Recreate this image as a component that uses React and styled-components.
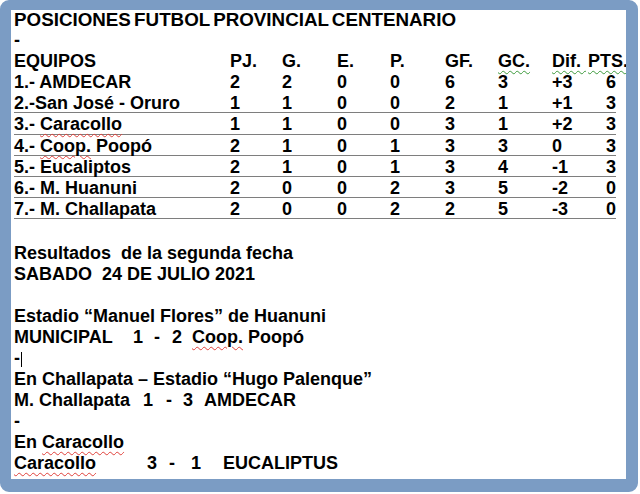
import React from "react";
import styled, { createGlobalStyle } from "styled-components";

const standings = [
  { team: "1.- AMDECAR", pj: 2, g: 2, e: 0, p: 0, gf: 6, gc: 3, dif: "+3", pts: 6 },
  { team: "2.-San José - Oruro", pj: 1, g: 1, e: 0, p: 0, gf: 2, gc: 1, dif: "+1", pts: 3, lined: true },
  { team: "3.- ", flagged: "Caracollo", pj: 1, g: 1, e: 0, p: 0, gf: 3, gc: 1, dif: "+2", pts: 3, lined: true },
  { team: "4.- ", flagged: "Coop.", rest: " Poopó", pj: 2, g: 1, e: 0, p: 1, gf: 3, gc: 3, dif: "0", pts: 3, lined: true },
  { team: "5.- Eucaliptos", pj: 2, g: 1, e: 0, p: 1, gf: 3, gc: 4, dif: "-1", pts: 3, lined: true },
  { team: "6.- M. Huanuni", pj: 2, g: 0, e: 0, p: 2, gf: 3, gc: 5, dif: "-2", pts: 0, lined: true },
  { team: "7.- M. Challapata", pj: 2, g: 0, e: 0, p: 2, gf: 2, gc: 5, dif: "-3", pts: 0, lined: true },
];

const RED = "#e0403a";
const GREEN = "#3c9a3c";

export default function App() {
  return (
    <>
      <GlobalStyle />
      <Frame>
        <Title>POSICIONES FUTBOL PROVINCIAL CENTENARIO</Title>
        <Line>-</Line>
        <Row>
          <Cell>EQUIPOS</Cell>
          <Cell>PJ.</Cell>
          <Cell>G.</Cell>
          <Cell>E.</Cell>
          <Cell>P.</Cell>
          <Cell>GF.</Cell>
          <Cell><Squiggle $color={GREEN}>GC.</Squiggle></Cell>
          <Cell><Squiggle $color={GREEN}>Dif. </Squiggle></Cell>
          <Cell><Squiggle $color={GREEN}>PTS.</Squiggle></Cell>
        </Row>
        {standings.map((r, i) => (
          <Row key={i} $lined={r.lined}>
            <Cell>
              {r.team}
              {r.flagged && <Squiggle $color={RED}>{r.flagged}</Squiggle>}
              {r.rest}
            </Cell>
            <Cell>{r.pj}</Cell>
            <Cell>{r.g}</Cell>
            <Cell>{r.e}</Cell>
            <Cell>{r.p}</Cell>
            <Cell>{r.gf}</Cell>
            <Cell>{r.gc}</Cell>
            <Cell>{r.dif}</Cell>
            <Cell $right>{r.pts}</Cell>
          </Row>
        ))}

        <Results>
          <Para>&nbsp;</Para>
          <Para>Resultados&nbsp; de la segunda fecha</Para>
          <Para>SABADO&nbsp; 24 DE JULIO 2021</Para>
          <Para>&nbsp;</Para>
          <Para>Estadio “Manuel Flores” de Huanuni</Para>
          <Para>
            <Slot $w={119}>MUNICIPAL</Slot>
            <Slot $w={21}>1</Slot>
            <Slot $w={18}>-</Slot>
            <Slot $w={20}>2</Slot>
            <Squiggle $color={RED}>Coop.</Squiggle> Poopó
          </Para>
          <Para>-<Caret /></Para>
          <Para>En Challapata – Estadio “Hugo Palenque”</Para>
          <Para>
            <Slot $w={129}>M. Challapata</Slot>
            <Slot $w={23}>1</Slot>
            <Slot $w={17}>-</Slot>
            <Slot $w={21}>3</Slot>
            AMDECAR
          </Para>
          <Para>-</Para>
          <Para>En <Squiggle $color={RED}>Caracollo</Squiggle></Para>
          <Para>
            <Slot $w={133}><Squiggle $color={RED}>Caracollo</Squiggle></Slot>
            <Slot $w={22}>3</Slot>
            <Slot $w={22}>-</Slot>
            <Slot $w={32}>1</Slot>
            EUCALIPTUS
          </Para>
        </Results>
      </Frame>
    </>
  );
}

const GlobalStyle = createGlobalStyle`
  body {
    margin: 0;
    background: #fff;
  }
`;

const Frame = styled.div`
  width: 638px;
  height: 492px;
  box-sizing: border-box;
  border: solid #7b9cc4;
  border-width: 10px 12px 13px 11px;
  border-radius: 9px;
  background: #fff;
  padding-left: 3px;
  overflow: hidden;
  font-family: "Liberation Sans", Arial, sans-serif;
  font-weight: 700;
  font-size: 18px;
  color: #000;
`;

const Line = styled.div`
  height: 21.1px;
  line-height: 23px;
  white-space: pre;
`;

const Title = styled(Line)`
  margin-top: -2px;
  font-size: 18.8px;
  word-spacing: -2px;
`;

const Row = styled.div`
  display: grid;
  grid-template-columns: 216px 52px 55px 53px 55px 53px 54px 36px 28px;
  width: 602px;
  height: 21.1px;
  line-height: 23px;
  box-sizing: border-box;
  border-bottom: ${p => (p.$lined ? "1px solid #7e7e7e" : "none")};
`;

const Cell = styled.div`
  white-space: pre;
  text-align: ${p => (p.$right ? "right" : "left")};
`;

const Squiggle = styled.span`
  text-decoration: underline wavy ${p => p.$color};
  text-decoration-thickness: 1px;
  text-underline-offset: 3px;
`;

const Results = styled.div`
  margin-top: 3px;
`;

const Para = styled.div`
  height: 21px;
  line-height: 21px;
  white-space: pre;
`;

const Slot = styled.span`
  display: inline-block;
  width: ${p => p.$w}px;
`;

const Caret = styled.span`
  display: inline-block;
  width: 1px;
  height: 15px;
  margin-left: 1px;
  background: #000;
  vertical-align: -3px;
`;
